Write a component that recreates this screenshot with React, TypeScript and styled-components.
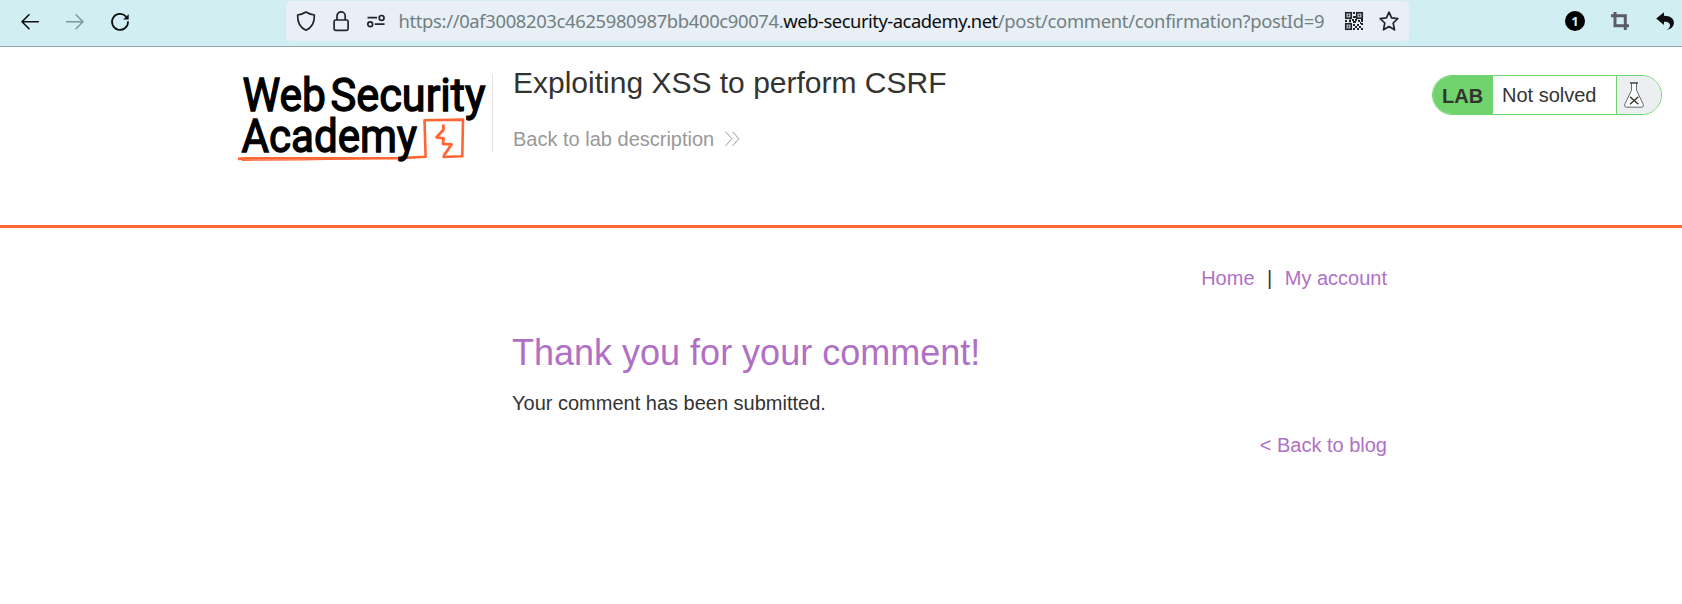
import React from "react";
import styled, { createGlobalStyle } from "styled-components";

const GlobalStyle = createGlobalStyle`
  body {
    margin: 0;
    background: #fff;
    color: #333332;
    font: 20px/24px "Liberation Sans", Arial, sans-serif;
    overflow: hidden;
  }
`;

const Page = styled.div`
  height: 604px;
`;

const Toolbar = styled.div`
  display: flex;
  align-items: flex-start;
  box-sizing: border-box;
  height: 47px;
  padding: 1px 6px 0 20px;
  background: #d1eef2;
  border-bottom: 1px solid #95a7ab;
`;

const ToolGroup = styled.div<{ $gap: number; $width?: number; $end?: boolean }>`
  display: flex;
  flex: none;
  align-items: center;
  justify-content: ${(p) => (p.$end ? "flex-end" : "flex-start")};
  height: 40px;
  gap: ${(p) => p.$gap}px;
  width: ${(p) => (p.$width ? `${p.$width}px` : "auto")};
`;

const AddressBar = styled.div`
  display: flex;
  flex: none;
  align-items: center;
  box-sizing: border-box;
  width: 1123px;
  height: 40px;
  padding: 0 10px;
  background: #e8eff6;
  border-radius: 5px;
`;

const Url = styled.div`
  flex: 1;
  margin-left: 12.5px;
  font: 400 18.4px/40px "Noto Sans", sans-serif;
  color: #72807f;
  white-space: nowrap;
`;

const UrlPart = styled.span<{ $spacing: number; $strong?: boolean }>`
  letter-spacing: ${(p) => p.$spacing}px;
  color: ${(p) => (p.$strong ? "#0c0d0e" : "inherit")};
`;

const Icon = styled.svg`
  display: block;
  flex: none;
  overflow: visible;
`;

const Header = styled.header`
  display: flex;
  align-items: flex-start;
  box-sizing: border-box;
  height: 181px;
  padding: 18px 20px 0 238px;
  border-bottom: 3px solid #ff6633;
`;

const LogoBox = styled.div`
  box-sizing: border-box;
  width: 255px;
  height: 77px;
  margin-top: 10px;
  border-right: 1px solid #e3e3e5;
`;

const LabInfo = styled.div`
  flex: 1;
  padding-left: 20px;
`;

const Title = styled.h2`
  margin: 0 0 26px;
  font-size: 30px;
  line-height: 36px;
  font-weight: 400;
`;

const BackLink = styled.a`
  display: flex;
  align-items: center;
  gap: 11px;
  color: #999998;
`;

const Status = styled.div`
  display: flex;
  box-sizing: border-box;
  width: 230px;
  height: 40px;
  margin-top: 10px;
  overflow: hidden;
  border: 1px solid #71d36d;
  border-radius: 20px;
  line-height: 38px;
`;

const StatusTag = styled.span`
  box-sizing: border-box;
  width: 60px;
  padding: 1px 0 0 9px;
  background: #71d36d;
  font-weight: 700;
`;

const StatusText = styled.span`
  flex: 1;
  padding-left: 9px;
`;

const StatusIcon = styled.span`
  display: flex;
  align-items: center;
  box-sizing: border-box;
  width: 45px;
  padding-left: 7px;
  background: #ebeff2;
  border-left: 1px solid #71d36d;
`;

const Main = styled.main`
  display: flex;
  flex-direction: column;
  width: 875px;
  margin-left: 512px;
  padding-top: 38px;
`;

const Nav = styled.nav`
  display: flex;
  justify-content: flex-end;
  gap: 12.5px;
`;

const Link = styled.a`
  color: #b070c6;
`;

const Heading = styled.h1`
  margin: 43px 0 18px;
  font-size: 36px;
  line-height: 40px;
  font-weight: 400;
  color: #b070c6;
`;

const Message = styled.p`
  margin: 0 0 18px;
`;

const BlogLink = styled(Link)`
  align-self: flex-end;
`;

const Logo = () => (
  <Icon width="254" height="88" viewBox="238 75 254 88">
    <g fill="none" stroke="#ff6633" strokeLinejoin="round">
      <path d="M238 158.9 L247 158.4 L400 158.1 L425.6 156.7 L424.5 120.3 L463 119.6 L462.3 156.3 L442.5 157" strokeWidth="2.6" />
      <path d="M242 160.3 L300 160 L410 157.8" strokeWidth="1.2" />
      <path d="M443.3 124.5 L443.4 130 L436.5 137.3 L443.5 138.3 L443 143.8 L451.5 144.5 L443.5 156" strokeWidth="2.8" />
    </g>
    <g fill="#000" stroke="#000" strokeWidth="1.4" fontFamily="Roboto, sans-serif" fontWeight="400" fontSize="47">
      <text x="242.5" y="110.8" textLength="83.5" lengthAdjust="spacingAndGlyphs">Web</text>
      <text x="330.5" y="110.8" textLength="155" lengthAdjust="spacingAndGlyphs">Security</text>
      <text x="241.5" y="151.7" textLength="175.5" lengthAdjust="spacingAndGlyphs">Academy</text>
    </g>
  </Icon>
);

const BackArrow = () => (
  <Icon width="20" height="20" viewBox="0 0 20 20" fill="none" stroke="#0c0d0e" strokeWidth="1.6" strokeLinecap="round" strokeLinejoin="round">
    <path d="M18.3 10.8H2M9 3.8L2 10.8L9 17.8" />
  </Icon>
);

const ForwardArrow = () => (
  <Icon width="20" height="20" viewBox="0 0 20 20" fill="none" stroke="#829599" strokeWidth="1.5" strokeLinecap="round" strokeLinejoin="round">
    <path d="M1.7 10.8H18M11 3.8L18 10.8L11 17.8" />
  </Icon>
);

const Reload = () => (
  <Icon width="20" height="20" viewBox="0 0 20 20" fill="none" stroke="#0c0d0e" strokeWidth="1.7" strokeLinecap="round">
    <path d="M18 10.9A8 8 0 1 1 15.8 5.4" />
    <path d="M18.7 3.2V8.6H13.2Z" fill="#0c0d0e" stroke="none" />
  </Icon>
);

const Shield = () => (
  <Icon width="20" height="20" viewBox="0 0 20 20" fill="none" stroke="#202629" strokeWidth="1.7" strokeLinejoin="round">
    <path d="M10 1C7.5 2.7 4.7 3.6 1.6 4C1.5 10.5 4 16.8 10 19.2C16 16.8 18.5 10.5 18.4 4C15.3 3.6 12.5 2.7 10 1Z" />
  </Icon>
);

const Lock = () => (
  <Icon width="20" height="20" viewBox="0 0 20 20" fill="none" stroke="#202629" strokeWidth="1.7">
    <rect x="3.1" y="9" width="14" height="10.3" rx="1.6" />
    <path d="M6 9V5A4.1 4.1 0 0 1 14.2 5V9" />
  </Icon>
);

const Permissions = () => (
  <Icon width="20" height="20" viewBox="0 0 20 20" fill="none" stroke="#202629" strokeWidth="1.7">
    <path d="M1.5 6.7H11M8.8 13.2H18.6" />
    <circle cx="15.6" cy="6.9" r="2.4" />
    <circle cx="4.2" cy="13.2" r="2.4" />
  </Icon>
);

const QrCode = () => (
  <Icon width="18" height="18" viewBox="0 0 18 18" fill="none" stroke="#202629" strokeWidth="1.7">
    <rect x="0.8" y="0.8" width="5.4" height="5.4" />
    <rect x="11.8" y="0.8" width="5.4" height="5.4" />
    <rect x="0.8" y="11.8" width="5.4" height="5.4" />
    <g fill="#202629" stroke="none">
      <path d="M2.6 2.6h1.8v1.8H2.6zM13.6 2.6h1.8v1.8h-1.8zM2.6 13.6h1.8v1.8H2.6z" />
      <path d="M8 0h2v2H8zM8 4h3v2H8zM0 8h2v2H0zM4 7.5h2v2.7H4zM7 7h2v2H7zM10 7h2v2h-2zM8 9h3v2H8zM13 8h2v2h-2zM16 7h2v3h-2zM8 12h2v2H8zM8 16h2v2H8zM10 14h2v2h-2zM12 12h2v2h-2zM14 14h2v2h-2zM16 11h2v2h-2zM12 16h2v2h-2zM16 16h2v2h-2zM15 10h1v2h-1z" />
    </g>
  </Icon>
);

const Star = () => (
  <Icon width="20" height="20" viewBox="0 0 20 20" fill="none" stroke="#202629" strokeWidth="1.7" strokeLinejoin="round">
    <path d="M10 1.2L12.6 6.9L18.8 7.7L14.2 12L15.5 18.8L10 15.5L4.5 18.8L5.8 12L1.2 7.7L7.4 6.9Z" />
  </Icon>
);

const Badge = styled.span`
  width: 20px;
  height: 20px;
  border-radius: 50%;
  background: #000;
  color: #d1eef2;
  font: 700 13px/20px "Noto Sans", sans-serif;
  text-align: center;
`;

const Crop = () => (
  <Icon width="18" height="18" viewBox="0 0 18 18" fill="none" stroke="#5b5b66" strokeWidth="3">
    <path d="M0 3.7H14.3V18M4 0V13.7H18" />
  </Icon>
);

const Reply = () => (
  <Icon width="20" height="18" viewBox="-0.8 0 20 18" fill="#0c0d0e">
    <path d="M0.4 6.4L8.2 0.3V3.8C14.5 3.9 18.1 6.5 18.1 10.7C18.1 14.4 15.6 16.8 11.2 17.8C13.8 15.9 14.8 14.2 14 12.2C13.3 10.2 11.2 9.7 8.2 9.7V13Z" />
  </Icon>
);

const Chevrons = () => (
  <Icon width="15" height="16" viewBox="0 0 15 16" fill="none" stroke="#999998" strokeWidth="1">
    <path d="M0.6 0.8L7 7.7L0.6 14.8M7.5 0.8L13.9 7.7L7.5 14.8" />
  </Icon>
);

const Flask = () => (
  <Icon width="20" height="26" viewBox="0 0 20 26" fill="#fff" stroke="#666" strokeWidth="1">
    <path d="M7.5 1V8.3L0.8 22.2Q0 25.2 2.3 25.2H17.7Q20 25.2 19.2 22.2L12.5 8.3V1" />
    <path d="M6 1H14" strokeWidth="1.6" stroke="#444" />
    <path d="M6 14.8L14.4 22.3M14.4 14.8L6 22.3" stroke="#333332" strokeWidth="1.4" />
  </Icon>
);

export default function App() {
  return (
    <Page>
      <GlobalStyle />
      <Toolbar>
        <ToolGroup $gap={25} $width={266}>
          <BackArrow />
          <ForwardArrow />
          <Reload />
        </ToolGroup>
        <AddressBar>
          <ToolGroup $gap={15}>
            <Shield />
            <Lock />
            <Permissions />
          </ToolGroup>
          <Url>
            <UrlPart $spacing={-0.34}>https://0af3008203c4625980987bb400c90074.</UrlPart>
            <UrlPart $spacing={-0.48} $strong>web-security-academy.net</UrlPart>
            <UrlPart $spacing={-0.3}>/post/comment/confirmation?postId=9</UrlPart>
          </Url>
          <ToolGroup $gap={16}>
            <QrCode />
            <Star />
          </ToolGroup>
        </AddressBar>
        <ToolGroup $gap={26} $width={266} $end>
          <Badge>1</Badge>
          <Crop />
          <Reply />
        </ToolGroup>
      </Toolbar>
      <Header>
        <LogoBox>
          <Logo />
        </LogoBox>
        <LabInfo>
          <Title>Exploiting XSS to perform CSRF</Title>
          <BackLink>
            Back to lab description
            <Chevrons />
          </BackLink>
        </LabInfo>
        <Status>
          <StatusTag>LAB</StatusTag>
          <StatusText>Not solved</StatusText>
          <StatusIcon>
            <Flask />
          </StatusIcon>
        </Status>
      </Header>
      <Main>
        <Nav>
          <Link>Home</Link>
          <span>|</span>
          <Link>My account</Link>
        </Nav>
        <Heading>Thank you for your comment!</Heading>
        <Message>Your comment has been submitted.</Message>
        <BlogLink>&lt; Back to blog</BlogLink>
      </Main>
    </Page>
  );
}
